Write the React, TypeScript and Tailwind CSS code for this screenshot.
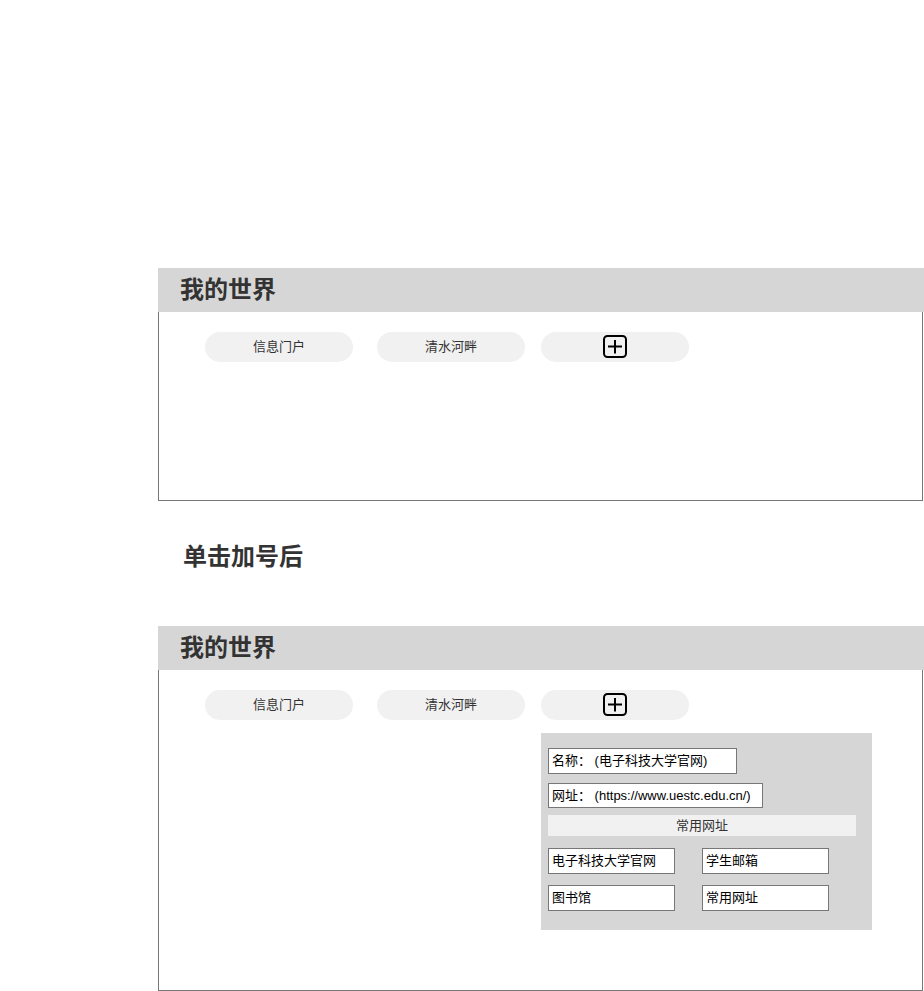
import { ReactNode } from "react";

const font = { fontFamily: '"Liberation Sans", Arial, "Noto Sans CJK SC", sans-serif' };

function PlusIcon() {
  return (
    <svg width="26" height="24" viewBox="0 0 26 24" fill="none">
      <rect x="2" y="1" width="22" height="21" rx="3.5" stroke="#000" strokeWidth="2" />
      <line x1="13" y1="5" x2="13" y2="18.5" stroke="#000" strokeWidth="2" />
      <line x1="6" y1="11.5" x2="20" y2="11.5" stroke="#000" strokeWidth="2" />
    </svg>
  );
}

function Pill({ children }: { children: ReactNode }) {
  return (
    <div className="w-[148px] h-[30px] rounded-full bg-[#f1f1f1] flex items-center justify-center pb-[1px] text-[13px] text-[#333]">
      {children}
    </div>
  );
}

function Tabs() {
  return (
    <div className="flex items-center">
      <Pill>信息门户</Pill>
      <div className="w-[24px]" />
      <Pill>清水河畔</Pill>
      <div className="w-[16px]" />
      <Pill>
        <PlusIcon />
      </Pill>
    </div>
  );
}

function Header() {
  return (
    <div className="h-[44px] bg-[#d6d6d6] flex items-center pl-[22px] text-[24px] font-bold text-[#333]">
      我的世界
    </div>
  );
}

function Field({ w, h, children }: { w: string; h: string; children: ReactNode }) {
  return (
    <div className={`${w} ${h} bg-white border border-[#777] flex items-center pl-[3px] text-[13px] text-black whitespace-nowrap`}>
      {children}
    </div>
  );
}

function AddPopup() {
  return (
    <div className="w-[331px] h-[197px] bg-[#d6d6d6] pl-[7px] pt-[15px] flex flex-col">
      <Field w="w-[189px]" h="h-[26px]">名称：&nbsp;(电子科技大学官网)</Field>
      <div className="h-[9px]" />
      <Field w="w-[215px]" h="h-[25px]">网址：&nbsp;(https://www.uestc.edu.cn/)</Field>
      <div className="h-[7px]" />
      <div className="w-[308px] h-[21px] bg-[#f1f1f1] flex items-center justify-center text-[13px] text-[#333]">
        常用网址
      </div>
      <div className="h-[12px]" />
      <div className="grid grid-cols-[127px_127px] gap-x-[27px] gap-y-[11px]">
        <Field w="w-[127px]" h="h-[26px]">电子科技大学官网</Field>
        <Field w="w-[127px]" h="h-[26px]">学生邮箱</Field>
        <Field w="w-[127px]" h="h-[26px]">图书馆</Field>
        <Field w="w-[127px]" h="h-[26px]">常用网址</Field>
      </div>
    </div>
  );
}

export default function App() {
  return (
    <div className="w-[924px] min-h-[991px] bg-white pt-[268px] pl-[158px]" style={font}>
      {/* before */}
      <Header />
      <div className="w-[765px] h-[189px] border border-t-0 border-[#777] pl-[46px] pt-[20px]">
        <Tabs />
      </div>

      <div className="h-[125px] pt-[38px] pl-[25px] text-[24px] leading-[36px] font-bold text-[#333]">
        单击加号后
      </div>

      {/* after */}
      <Header />
      <div className="w-[765px] h-[321px] border border-t-0 border-[#777] pl-[46px] pt-[20px]">
        <Tabs />
        <div className="ml-[336px] mt-[13px]">
          <AddPopup />
        </div>
      </div>
    </div>
  );
}
